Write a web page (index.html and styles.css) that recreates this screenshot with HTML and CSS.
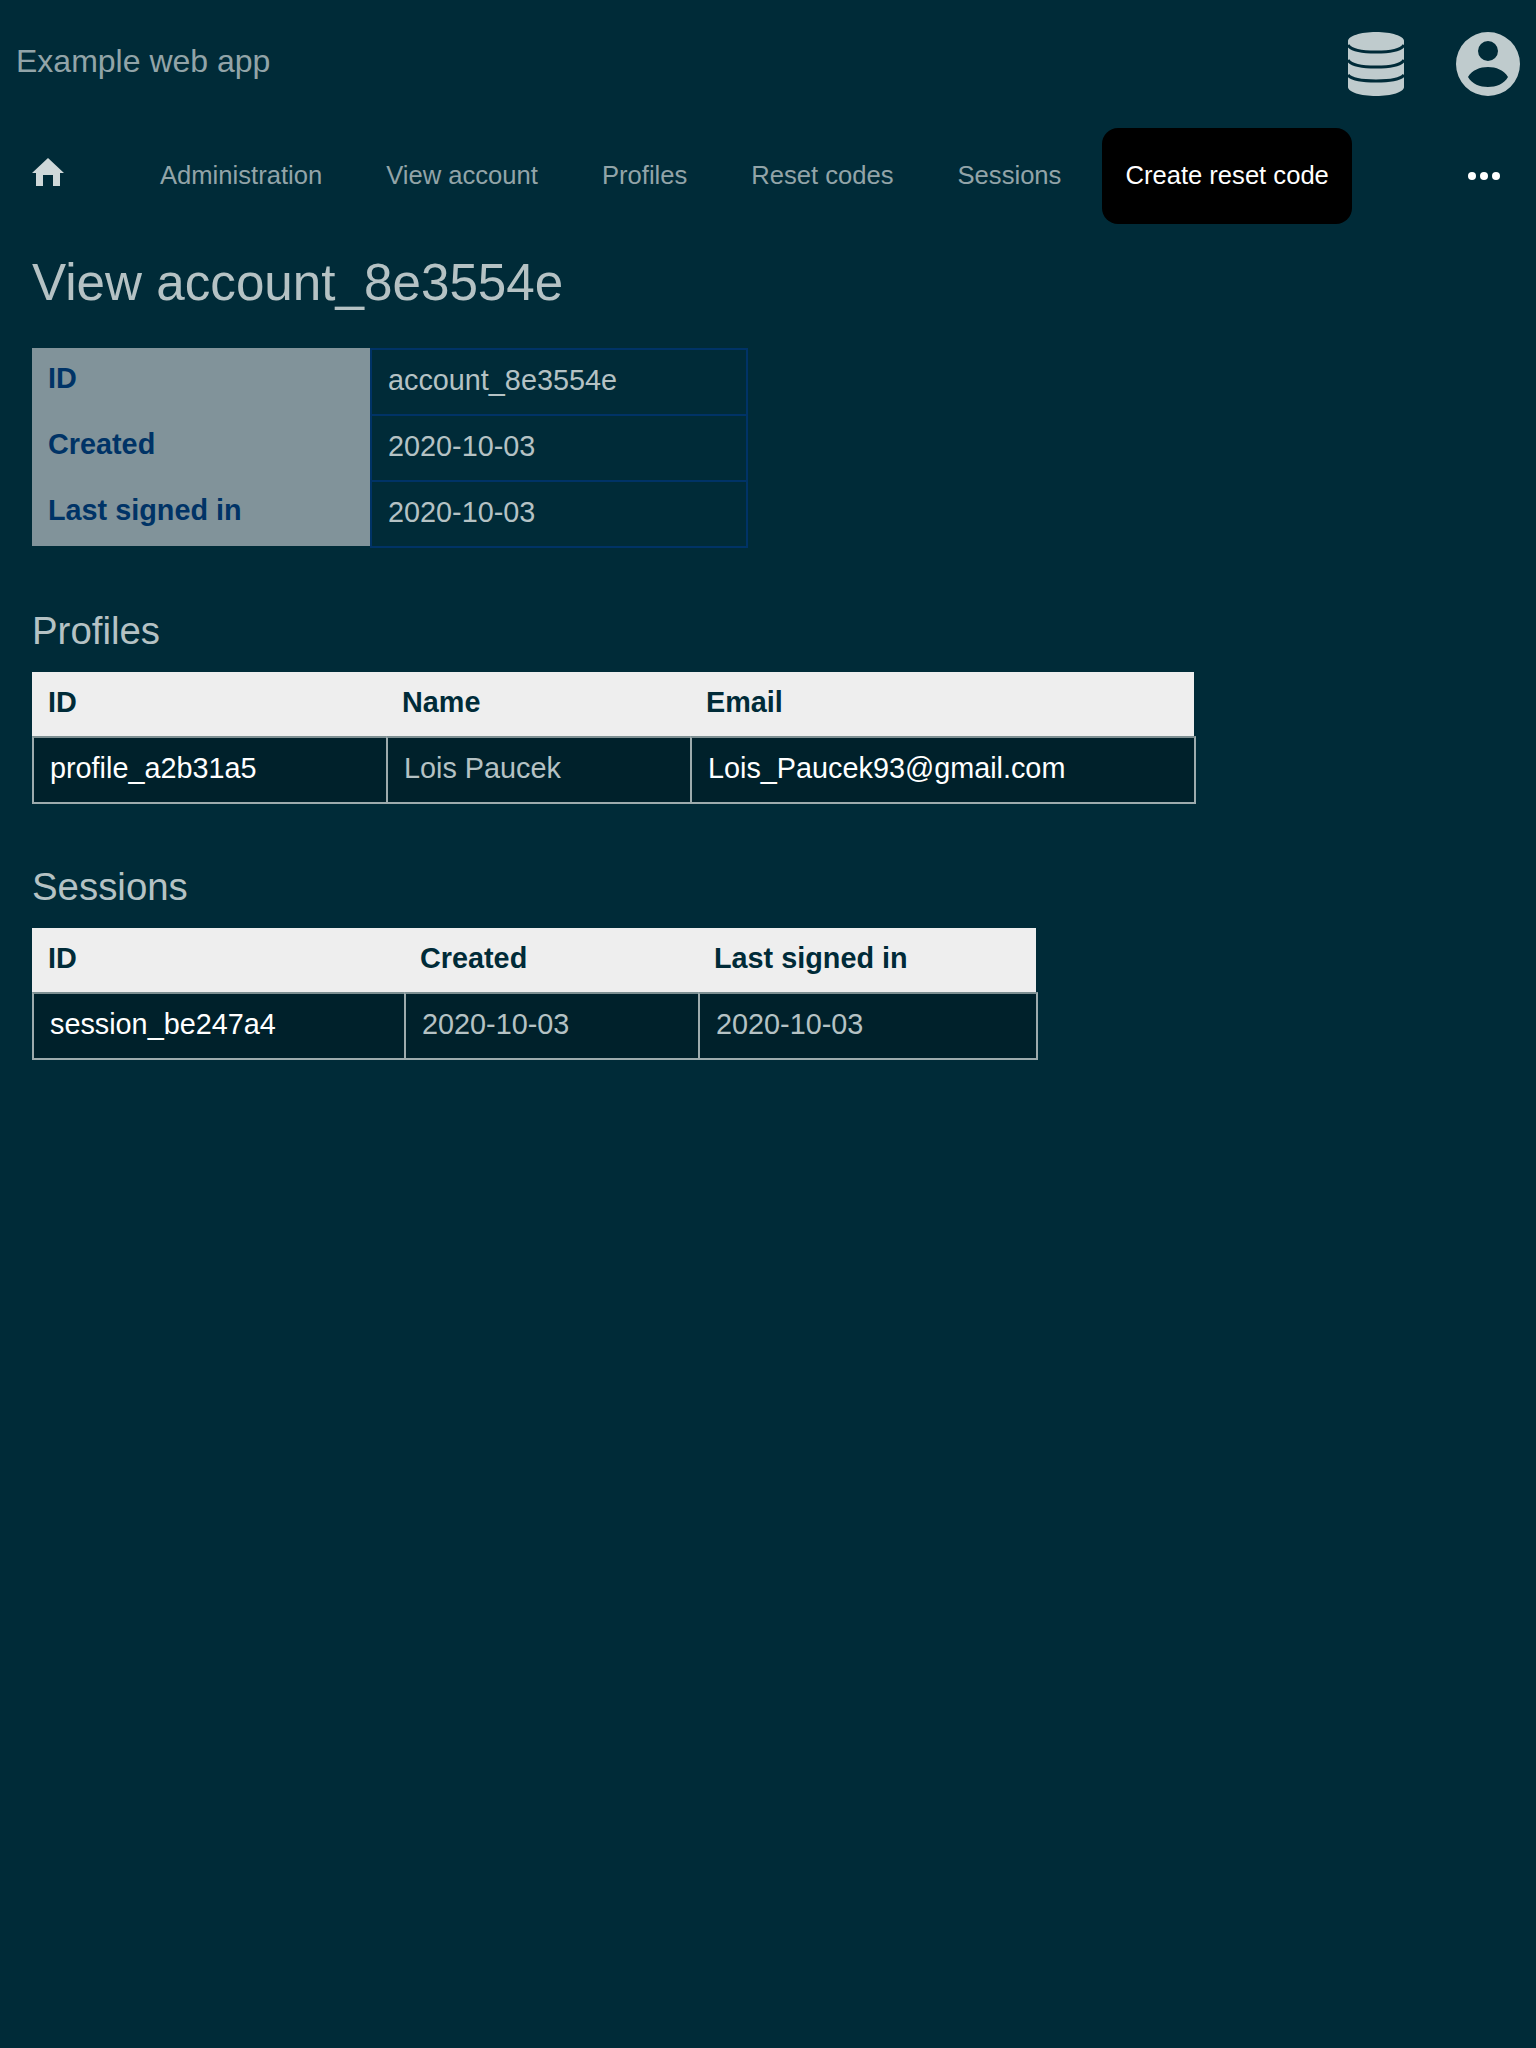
FILE: index.html
```html
<!DOCTYPE html>
<html lang="en">
<head>
    <meta charset="UTF-8">
    <meta name="viewport" content="width=device-width, initial-scale=1.0">
    <title>View account_8e3554e</title>
    <link rel="stylesheet" href="styles.css">
</head>
<body>
    <header class="topbar">
        <span class="brand">Example web app</span>
        <div class="topbar-icons">
            <svg class="icon-db" viewBox="0 0 56 64" aria-hidden="true">
                <path d="M0 9C0 4 12.500 0 28 0s28 4 28 9v46c0 5-12.500 9-28 9S0 60 0 55z"/>
                <path class="cut" d="M0 13c3 5 14 7 28 7s25-2 28-7M0 28c3 5 14 7 28 7s25-2 28-7M0 43c3 4 14 6 28 6s25-2 28-6"/>
            </svg>
            <svg class="icon-user" viewBox="0 0 64 64" aria-hidden="true">
                <path fill-rule="evenodd" d="M32 0a32 32 0 1 0 0 64a32 32 0 1 0 0-64zM32 9a10 10 0 1 1 0 20a10 10 0 1 1 0-20zM12 45c4-7 12-10 20-10s16 3 20 10c-4 7-12 10-20 10s-16-3-20-10z"/>
            </svg>
        </div>
    </header>

    <nav class="navbar">
        <a class="nav-home" href="#" aria-label="Home">
            <svg viewBox="0 0 32 28" aria-hidden="true">
                <path d="M16 0L32 15h-4V28h-7V17H11v11H4V15H0z"/>
            </svg>
        </a>
        <a class="nav-link" href="#">Administration</a>
        <a class="nav-link" href="#">View account</a>
        <a class="nav-link" href="#">Profiles</a>
        <a class="nav-link" href="#">Reset codes</a>
        <a class="nav-link" href="#">Sessions</a>
        <a class="nav-button" href="#">Create reset code</a>
        <span class="nav-more"><i></i><i></i><i></i></span>
    </nav>

    <main class="content">
        <h1>View account_8e3554e</h1>
        <table class="detail">
            <tr><th>ID</th><td>account_8e3554e</td></tr>
            <tr><th>Created</th><td>2020-10-03</td></tr>
            <tr><th>Last signed in</th><td>2020-10-03</td></tr>
        </table>

        <h2>Profiles</h2>
        <table class="list profiles">
            <tr><th>ID</th><th>Name</th><th>Email</th></tr>
            <tr><td class="bright">profile_a2b31a5</td><td>Lois Paucek</td><td class="bright">Lois_Paucek93@gmail.com</td></tr>
        </table>

        <h2>Sessions</h2>
        <table class="list sessions">
            <tr><th>ID</th><th>Created</th><th>Last signed in</th></tr>
            <tr><td class="bright">session_be247a4</td><td>2020-10-03</td><td>2020-10-03</td></tr>
        </table>
    </main>
</body>
</html>
```

FILE: styles.css
```css
body {
    margin: 0;
    min-height: 2048px;
    background-color: #002b38;
    color: #b5c2c4;
    font-family: "Liberation Sans", Arial, sans-serif;
}
a {
    text-decoration: none;
}
.topbar {
    display: flex;
    justify-content: space-between;
    align-items: center;
    height: 128px;
    padding: 0 16px;
    box-sizing: border-box;
}
.brand {
    font-size: 32px;
    color: #92a4a8;
    margin-top: -6px;
}
.topbar-icons {
    display: flex;
    gap: 52px;
}
.topbar-icons svg {
    display: block;
    height: 64px;
    fill: #bfcbcd;
}
.icon-db {
    width: 56px;
}
.icon-db .cut {
    fill: none;
    stroke: #002b38;
    stroke-width: 3;
}
.icon-user {
    width: 64px;
}
.navbar {
    display: flex;
    align-items: center;
    height: 96px;
    padding-left: 32px;
    font-size: 25.6px;
}
.nav-home {
    width: 64px;
    margin-right: 64px;
}
.nav-home svg {
    display: block;
    width: 32px;
    height: 28px;
    margin-top: -8px;
    fill: #cfd8d9;
}
.nav-link {
    margin: -2px 64px 0 0;
    color: #92a4a8;
}
.nav-button {
    margin-left: -23px;
    padding: 0 23px;
    height: 96px;
    line-height: 94px;
    border-radius: 16px;
    background-color: #000;
    color: #fff;
}
.nav-more {
    display: flex;
    gap: 4px;
    margin-left: 116px;
}
.nav-more i {
    width: 8px;
    height: 8px;
    border-radius: 50%;
    background-color: #fff;
}
.content {
    padding: 0 32px;
}
h1 {
    margin: 0;
    padding: 29px 0 36px;
    font-size: 51.2px;
    line-height: 59px;
    font-weight: normal;
}
h2 {
    margin: 0;
    padding: 61px 0 19px;
    font-size: 38.4px;
    line-height: 44px;
    font-weight: normal;
}
table {
    border-collapse: separate;
    border-spacing: 0;
    table-layout: fixed;
    font-size: 28.8px;
}
th, td {
    padding: 14px 16px 18px;
    line-height: 32px;
    text-align: left;
    box-sizing: border-box;
}
th {
    font-weight: bold;
    vertical-align: top;
}
.detail {
    width: 716px;
}
.detail th {
    width: 338px;
    background-color: #81939a;
    color: #003366;
}
.detail tr:last-child th {
    border-bottom: 2px solid transparent;
    background-clip: padding-box;
}
.detail td {
    border: 2px solid #003366;
    border-bottom: 0;
}
.detail tr:last-child td {
    border-bottom: 2px solid #003366;
}
.list th {
    background-color: #eee;
    background-clip: padding-box;
    color: #002b38;
}
.list th:last-child {
    border-right: 2px solid transparent;
}
.list td {
    background-color: #00212b;
    border: 2px solid #9dabad;
    border-top-color: #7d8f92;
    border-right: 0;
}
.list td:last-child {
    border-right: 2px solid #9dabad;
}
.list td.bright {
    color: #fff;
}
.profiles {
    width: 1164px;
}
.profiles th:nth-child(1) { width: 354px; }
.profiles th:nth-child(2) { width: 304px; }
.sessions {
    width: 1006px;
}
.sessions th:nth-child(1) { width: 372px; }
.sessions th:nth-child(2) { width: 294px; }
```
